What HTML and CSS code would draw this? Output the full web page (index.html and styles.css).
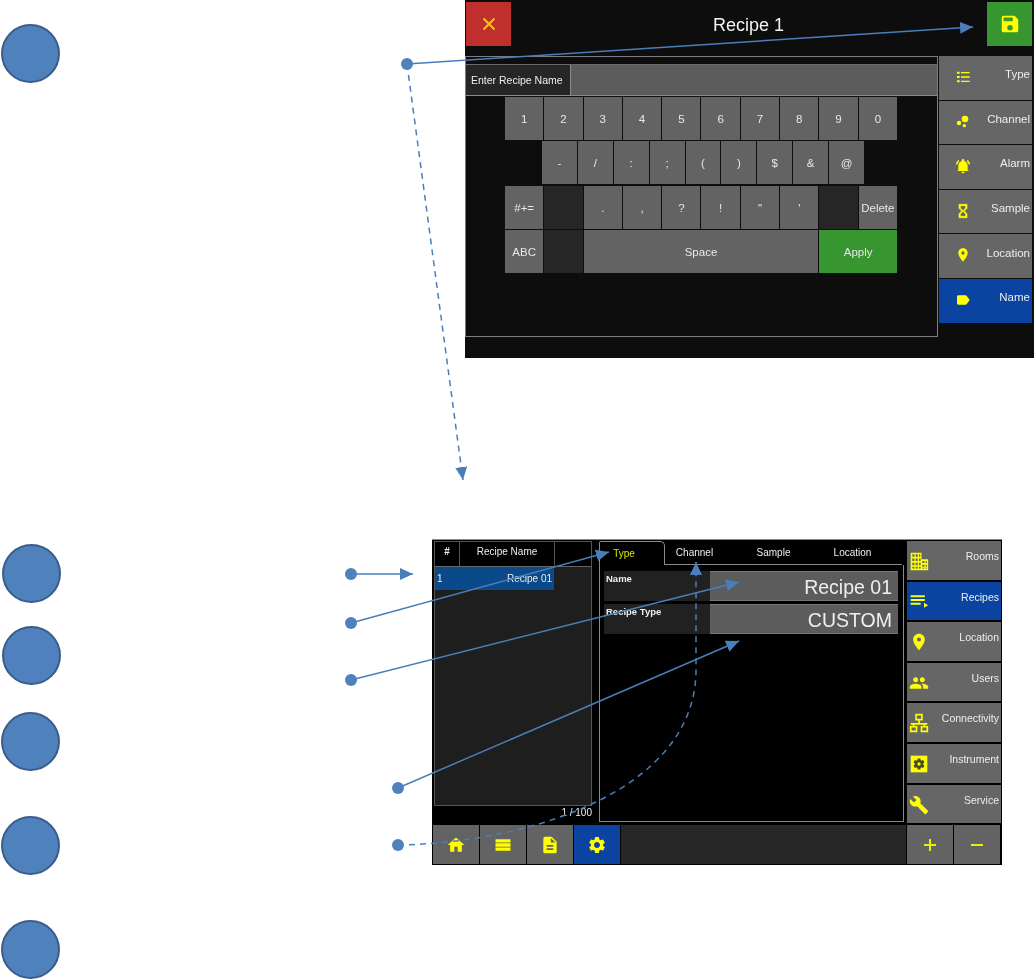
FILE: index.html
```html
<!DOCTYPE html>
<html lang="en">
<head>
  <meta charset="UTF-8">
  <title>Recipe Setup</title>
  <link rel="stylesheet" href="styles.css">
</head>
<body>
  <div class="canvas">

    <!-- recipe name keyboard screen -->
    <div class="screen screen-name">
      <div class="name-header">
        <div class="head-btn red">
          <svg class="icon-x" viewBox="0 0 14 14"><path d="M1.5 1.5l11 11M12.5 1.5l-11 11"/></svg>
        </div>
        <div class="name-title">Recipe 1</div>
        <div class="head-btn green">
          <svg class="icon-save" viewBox="0 0 24 24"><path d="M17 3H5a2 2 0 0 0-2 2v14a2 2 0 0 0 2 2h14a2 2 0 0 0 2-2V7l-4-4zm-5 16a3 3 0 1 1 0-6 3 3 0 0 1 0 6zm3-10H5V5h10v4z"/></svg>
        </div>
      </div>
      <div class="name-main">
        <div class="name-panel">
          <div class="input-row">
            <div class="input-label">Enter Recipe Name</div>
            <div class="input-box"></div>
          </div>
          <div class="keys">
            <div class="key-row">
              <div class="key">1</div><div class="key">2</div><div class="key">3</div><div class="key">4</div><div class="key">5</div>
              <div class="key">6</div><div class="key">7</div><div class="key">8</div><div class="key">9</div><div class="key">0</div>
            </div>
            <div class="key-row row-nine">
              <div class="key">-</div><div class="key">/</div><div class="key">:</div><div class="key">;</div><div class="key">(</div>
              <div class="key">)</div><div class="key">$</div><div class="key">&amp;</div><div class="key">@</div>
            </div>
            <div class="key-row row-gap">
              <div class="key">#+=</div><div class="key off"></div><div class="key">.</div><div class="key">,</div><div class="key">?</div>
              <div class="key">!</div><div class="key">"</div><div class="key">'</div><div class="key off"></div><div class="key">Delete</div>
            </div>
            <div class="key-row">
              <div class="key">ABC</div><div class="key off"></div>
              <div class="key span-six">Space</div>
              <div class="key span-two apply">Apply</div>
            </div>
          </div>
        </div>
        <div class="side-menu">
          <div class="side-btn">
            <svg class="icon" viewBox="0 0 24 24"><path d="M3 4h4v3H3zM3 10.5h4v3H3zM3 17h4v3H3zM9 4.5h13v2H9zM9 11h13v2H9zM9 17.500h13v2H9z"/></svg>
            <span>Type</span>
          </div>
          <div class="side-btn">
            <svg class="icon" viewBox="0 0 24 24"><circle cx="15" cy="9" r="5"/><circle cx="6" cy="15" r="3.300"/><circle cx="14" cy="19" r="2.500"/></svg>
            <span>Channel</span>
          </div>
          <div class="side-btn">
            <svg class="icon" viewBox="0 0 24 24"><path d="M12 23a2.500 2.500 0 0 0 2.500-2.500h-5A2.500 2.500 0 0 0 12 23zm7-5v-6c0-3.600-2-6.300-5-7V3.500a2 2 0 0 0-4 0V5c-3 .7-5 3.400-5 7v6l-2 1.500h18L19 18z"/><path d="M4.500 3L1 9l2 1 3.500-5.500zM19.500 3L23 9l-2 1-3.500-5.500z"/></svg>
            <span>Alarm</span>
          </div>
          <div class="side-btn">
            <svg class="icon icon-bold" viewBox="0 0 24 24"><path d="M6 2v6h.01L6 8.010 10 12l-4 4 .01.01H6V22h12v-5.990h-.01L18 16l-4-4 4-3.990-.01-.01H18V2H6zm10 14.500V20H8v-3.500l4-4 4 4zm-4-5l-4-4V4h8v3.500l-4 4z"/></svg>
            <span>Sample</span>
          </div>
          <div class="side-btn">
            <svg class="icon" viewBox="0 0 24 24"><path d="M12 2C8.130 2 5 5.130 5 9c0 5.250 7 13 7 13s7-7.750 7-13c0-3.870-3.130-7-7-7zm0 9.500a2.500 2.500 0 0 1 0-5 2.500 2.500 0 0 1 0 5z"/></svg>
            <span>Location</span>
          </div>
          <div class="side-btn active">
            <svg class="icon" viewBox="0 0 24 24"><path d="M17.630 5.840C17.270 5.330 16.670 5 16 5L5 5.010C3.900 5.010 3 5.900 3 7v10c0 1.100.9 1.990 2 1.990L16 19c.67 0 1.270-.33 1.630-.84L22 12l-4.370-6.160z"/></svg>
            <span>Name</span>
          </div>
        </div>
      </div>
    </div>

    <!-- recipes settings screen -->
    <div class="screen screen-setup">
      <div class="setup-left">
        <div class="recipe-list">
          <div class="list-head">
            <div class="col-num">#</div>
            <div class="col-name">Recipe Name</div>
          </div>
          <div class="list-body">
            <div class="list-row"><span>1</span><span>Recipe 01</span></div>
          </div>
        </div>
        <div class="list-count">1 / 100</div>
      </div>
      <div class="setup-center">
        <div class="tabs">
          <div class="tab current">Type</div>
          <div class="tab">Channel</div>
          <div class="tab">Sample</div>
          <div class="tab">Location</div>
        </div>
        <div class="tab-panel">
          <div class="form-row">
            <div class="form-label">Name</div>
            <div class="form-value">Recipe 01</div>
          </div>
          <div class="form-row">
            <div class="form-label">Recipe Type</div>
            <div class="form-value">CUSTOM</div>
          </div>
        </div>
      </div>
      <div class="setup-nav">
        <div class="nav-btn">
          <svg class="icon" viewBox="0 0 24 24"><path fill-rule="evenodd" d="M2 2h13v8h8v13H2zM4 4v3h2.500V4zm4 0v3h2.500V4zm4 0v3h1.500V4zM4 9v3h2.500V9zm4 0v3h2.500V9zm4 0v3h2V9zm4 3v2.500h2.500V12zm4 0v2.500h1.500V12zM4 14v3h2.500v-3zm4 0v3h2.500v-3zm4 0v3h2v-3zm4 2.500v2.500h2.500v-2.500zm4 0v2.500h1.500v-2.500zM4 19v2h2.500v-2zm4 0v2h2.500v-2zm4 0v2h2v-2zm4 1v1h2.500v-1zm4 0v1h1.500v-1z"/></svg>
          <span>Rooms</span>
        </div>
        <div class="nav-btn active">
          <svg class="icon" viewBox="0 0 24 24"><path d="M2 4h17v2.400H2zM2 8.500h17v2.400H2zM2 13h12v2.400H2zM18 13l5 3-5 3z"/></svg>
          <span>Recipes</span>
        </div>
        <div class="nav-btn">
          <svg class="icon" viewBox="0 0 24 24"><path d="M12 2C8.130 2 5 5.130 5 9c0 5.250 7 13 7 13s7-7.750 7-13c0-3.870-3.130-7-7-7zm0 9.500a2.500 2.500 0 0 1 0-5 2.500 2.500 0 0 1 0 5z"/></svg>
          <span>Location</span>
        </div>
        <div class="nav-btn">
          <svg class="icon" viewBox="0 0 24 24"><path d="M16 11c1.660 0 2.990-1.340 2.990-3S17.660 5 16 5s-3 1.340-3 3 1.340 3 3 3zm-8 0c1.660 0 2.990-1.340 2.990-3S9.660 5 8 5 5 6.340 5 8s1.340 3 3 3zm0 2c-2.330 0-7 1.170-7 3.500V19h14v-2.500c0-2.330-4.670-3.500-7-3.500zm8 0c-.29 0-.62.02-.97.05 1.160.84 1.970 1.970 1.970 3.450V19h6v-2.500c0-2.330-4.670-3.500-7-3.500z"/></svg>
          <span>Users</span>
        </div>
        <div class="nav-btn">
          <svg class="icon icon-line" viewBox="0 0 24 24"><path d="M8.500 2h7v6h-7zM12 8v5M2 13h20M5.500 13v3M18.500 13v3M2 16.500h7v5.500H2zM15 16.500h7v5.500h-7z"/></svg>
          <span>Connectivity</span>
        </div>
        <div class="nav-btn">
          <svg class="icon" viewBox="0 0 24 24">
            <rect x="2" y="2" width="20" height="20"/>
            <path class="gear-cut" d="M19.140 12.940c.04-.3.06-.61.06-.94 0-.32-.02-.64-.07-.94l2.030-1.580c.18-.14.23-.41.12-.61l-1.920-3.320c-.12-.22-.37-.29-.59-.22l-2.390.96c-.5-.38-1.030-.7-1.620-.94l-.36-2.540c-.04-.24-.24-.41-.48-.41h-3.840c-.24 0-.43.17-.47.41l-.36 2.540c-.59.24-1.130.57-1.620.94l-2.390-.96c-.22-.08-.47 0-.59.22L2.740 8.870c-.12.21-.08.47.12.61l2.030 1.580c-.05.3-.09.63-.09.94s.02.64.07.94l-2.030 1.580c-.18.14-.23.41-.12.61l1.920 3.320c.12.22.37.29.59.22l2.390-.96c.5.38 1.030.7 1.620.94l.36 2.540c.05.24.24.41.48.41h3.840c.24 0 .44-.17.47-.41l.36-2.540c.59-.24 1.130-.56 1.620-.94l2.390.96c.22.08.47 0 .59-.22l1.920-3.320c.12-.22.07-.47-.12-.61l-2.010-1.580z" transform="translate(3.600 3.600) scale(.7)"/>
            <circle cx="12" cy="12" r="2"/>
          </svg>
          <span>Instrument</span>
        </div>
        <div class="nav-btn">
          <svg class="icon" viewBox="0 0 24 24"><path d="M22.700 19l-9.100-9.100c.9-2.300.4-5-1.500-6.900-2-2-5-2.400-7.400-1.300L9 6 6 9 1.600 4.700C.4 7.100.9 10.100 2.900 12.100c1.900 1.900 4.600 2.400 6.900 1.500l9.100 9.100c.4.4 1 .4 1.400 0l2.300-2.300c.5-.4.5-1.100.1-1.400z"/></svg>
          <span>Service</span>
        </div>
      </div>
      <div class="setup-bottom">
        <div class="tool-btn">
          <svg class="icon" viewBox="0 0 24 24"><path d="M10 20v-6h4v6h5v-8h3L12 3 2 12h3v8z"/></svg>
        </div>
        <div class="tool-btn">
          <svg class="icon" viewBox="0 0 24 24"><path d="M3 5h18v4H3zM3 10h18v4H3zM3 15h18v4H3z"/></svg>
        </div>
        <div class="tool-btn">
          <svg class="icon" viewBox="0 0 24 24"><path d="M14 2H6c-1.100 0-1.990.9-1.990 2L4 20c0 1.100.89 2 1.990 2H18c1.100 0 2-.9 2-2V8l-6-6zm2 16H8v-2h8v2zm0-4H8v-2h8v2zm-3-5V3.500L18.500 9H13z"/></svg>
        </div>
        <div class="tool-btn active">
          <svg class="icon" viewBox="0 0 24 24"><path d="M19.140 12.940c.04-.3.06-.61.06-.94 0-.32-.02-.64-.07-.94l2.030-1.580c.18-.14.23-.41.12-.61l-1.920-3.320c-.12-.22-.37-.29-.59-.22l-2.390.96c-.5-.38-1.030-.7-1.620-.94l-.36-2.540c-.04-.24-.24-.41-.48-.41h-3.840c-.24 0-.43.17-.47.41l-.36 2.540c-.59.24-1.130.57-1.620.94l-2.390-.96c-.22-.08-.47 0-.59.22L2.740 8.870c-.12.21-.08.47.12.61l2.030 1.580c-.05.3-.09.63-.09.94s.02.64.07.94l-2.030 1.580c-.18.14-.23.41-.12.61l1.920 3.320c.12.22.37.29.59.22l2.390-.96c.5.38 1.030.7 1.620.94l.36 2.540c.05.24.24.41.48.41h3.840c.24 0 .44-.17.47-.41l.36-2.540c.59-.24 1.130-.56 1.620-.94l2.390.96c.22.08.47 0 .59-.22l1.920-3.320c.12-.22.07-.47-.12-.61l-2.010-1.580zM12 15.600c-1.980 0-3.600-1.620-3.600-3.600s1.620-3.600 3.600-3.600 3.600 1.620 3.600 3.600-1.620 3.600-3.600 3.600z"/></svg>
        </div>
        <div class="tool-fill"></div>
        <div class="tool-btn">
          <svg class="icon-pm" viewBox="0 0 14 14"><path d="M7 1v12M1 7h12"/></svg>
        </div>
        <div class="tool-btn">
          <svg class="icon-pm" viewBox="0 0 14 14"><path d="M1 7h12"/></svg>
        </div>
      </div>
    </div>

    <!-- numbered circles -->
    <div class="step step-1"></div>
    <div class="step step-2"></div>
    <div class="step step-3"></div>
    <div class="step step-4"></div>
    <div class="step step-5"></div>
    <div class="step step-6"></div>

    <!-- callouts over the screens -->
    <svg class="callouts" width="1034" height="979" viewBox="0 0 1034 979">
      <defs>
        <marker id="head" markerUnits="userSpaceOnUse" markerWidth="14" markerHeight="12" refX="13" refY="6" orient="auto">
          <path d="M0 0L13 6L0 12z" fill="#4a7ebb"/>
        </marker>
      </defs>
      <path class="line" marker-end="url(#head)" d="M407 64L973 27"/>
      <path class="line dashed" marker-end="url(#head)" d="M407 64L463 480"/>
      <path class="line" marker-end="url(#head)" d="M351 574L413 574"/>
      <path class="line" marker-end="url(#head)" d="M351 623L609 552"/>
      <path class="line" marker-end="url(#head)" d="M351 680L739 582"/>
      <path class="line" marker-end="url(#head)" d="M398 788L739 641"/>
      <path class="line dashed" marker-end="url(#head)" d="M398 845C530 843 696 790 696 670L696 562"/>
      <circle class="dot" cx="407" cy="64" r="6"/>
      <circle class="dot" cx="351" cy="574" r="6"/>
      <circle class="dot" cx="351" cy="623" r="6"/>
      <circle class="dot" cx="351" cy="680" r="6"/>
      <circle class="dot" cx="398" cy="788" r="6"/>
      <circle class="dot" cx="398" cy="845" r="6"/>
    </svg>
  </div>
</body>
</html>
```

FILE: styles.css
```css
body {
  margin: 0;
  background: #fff;
  font-family: "Liberation Sans", Arial, sans-serif;
}
.canvas {
  position: relative;
  width: 1034px;
  height: 979px;
  overflow: hidden;
}
.screen {
  position: absolute;
  color: #eee;
  filter: blur(0.5px);
}
.icon {
  width: 20px;
  height: 20px;
  fill: #ff0;
  flex: none;
}
.icon-line {
  fill: none;
  stroke: #ff0;
  stroke-width: 2;
}
.icon-bold {
  stroke: #ff0;
  stroke-width: 1;
}
.icon-save {
  width: 22px;
  height: 22px;
  fill: #ff0;
}
.gear-cut { fill: #4a4a20; }

/* name screen */
.screen-name {
  left: 465px;
  top: 0;
  width: 569px;
  height: 358px;
  background: #0d0d0d;
  box-sizing: border-box;
  padding: 2px 2px 0 0;
}
.name-header {
  display: flex;
  align-items: center;
  height: 44px;
  margin-bottom: 10px;
}
.head-btn {
  width: 45px;
  height: 44px;
  margin-left: 1px;
  display: flex;
  align-items: center;
  justify-content: center;
}
.red { background: #bf2f2b; }
.green { background: #37962f; }
.icon-x {
  width: 14px;
  height: 14px;
  fill: none;
  stroke: #f5c518;
  stroke-width: 2;
}
.name-title {
  flex: 1;
  text-align: center;
  font-size: 18px;
  color: #f2f2f2;
  padding-top: 3px;
}
.name-main {
  display: flex;
  gap: 1px;
}
.name-panel {
  width: 473px;
  height: 281px;
  box-sizing: border-box;
  border: 1px solid #7d7d7d;
  padding-top: 7px;
}
.input-row {
  display: flex;
  height: 32px;
  border-top: 1px solid #6a6a6a;
  border-bottom: 1px solid #8a8a8a;
  box-sizing: border-box;
}
.input-label {
  width: 104px;
  background: #262626;
  font-size: 10.500px;
  line-height: 30px;
  padding-left: 5px;
  box-sizing: border-box;
}
.input-box {
  flex: 1;
  background: #5c5c5c;
  border-left: 1px solid #8a8a8a;
}
.keys {
  width: 392px;
  margin: 1px 0 0 39px;
  display: flex;
  flex-direction: column;
  gap: 1px;
}
.key-row {
  display: grid;
  grid-template-columns: repeat(10, 1fr);
  gap: 1px;
  height: 43px;
}
.row-nine {
  grid-template-columns: repeat(9, 1fr);
  width: 322px;
  margin-left: 37px;
}
.row-gap { margin-top: 1px; }
.key {
  background: #636363;
  font-size: 11.500px;
  color: #e8e8e8;
  display: flex;
  align-items: center;
  justify-content: center;
}
.key.off { background: #262626; }
.span-six { grid-column: span 6; }
.span-two { grid-column: span 2; }
.key.apply { background: #37962f; }
.side-menu {
  display: flex;
  flex-direction: column;
  gap: 1px;
  width: 93px;
}
.side-btn {
  height: 43.600px;
  background: #666;
  display: flex;
  align-items: center;
  justify-content: space-between;
  box-sizing: border-box;
  padding: 0 2px 7px 16px;
  font-size: 11.500px;
}
.side-btn .icon {
  width: 16px;
  height: 16px;
  margin-top: 5px;
}
.side-btn.active { background: #0a44a0; }

/* settings screen */
.screen-setup {
  left: 432px;
  top: 539px;
  width: 570px;
  height: 326px;
  background: #000;
  border-top: 1px solid #8a8a8a;
  box-sizing: border-box;
  display: grid;
  grid-template-columns: 167px 308px 95px;
  grid-template-rows: 285px 40px;
}
.setup-left { padding-left: 2px; }
.recipe-list {
  width: 158px;
  margin-top: 1px;
  border: 1px solid #555;
  box-sizing: border-box;
  height: 265px;
  background: #1e1e1e;
}
.list-head {
  display: flex;
  height: 25px;
  background: #000;
  font-size: 10px;
  line-height: 20px;
  border-bottom: 1px solid #666;
  box-sizing: border-box;
}
.col-num {
  width: 24px;
  text-align: center;
  font-weight: bold;
  border-right: 1px solid #555;
}
.col-name {
  width: 94px;
  text-align: center;
  border-right: 1px solid #555;
}
.list-row {
  width: 119px;
  height: 23px;
  background: #0a4a8a;
  display: flex;
  justify-content: space-between;
  align-items: center;
  font-size: 10px;
  padding: 0 2px;
  box-sizing: border-box;
}
.list-count {
  width: 158px;
  text-align: right;
  font-size: 10px;
  margin-top: 1px;
}
.tabs {
  display: flex;
  height: 24px;
  font-size: 10px;
}
.tab {
  width: 79px;
  padding-right: 20px;
  text-align: center;
  line-height: 24px;
  border-bottom: 1px solid #8a8a8a;
  box-sizing: border-box;
}
.tab.current {
  width: 66px;
  padding-right: 16px;
  color: #d9e800;
  border: 1px solid #8a8a8a;
  border-bottom: none;
  border-radius: 2px 5px 0 0;
}
.setup-center {
  padding-top: 1px;
  width: 305px;
}
.tab-panel {
  height: 257px;
  border: 1px solid #8a8a8a;
  border-top: none;
  box-sizing: border-box;
  padding: 6px 5px 0 4px;
  display: flex;
  flex-direction: column;
  gap: 3px;
}
.form-row {
  display: flex;
  height: 30px;
}
.form-label {
  width: 106px;
  background: #212121;
  font-size: 9.500px;
  font-weight: bold;
  padding: 2px 0 0 2px;
  box-sizing: border-box;
}
.form-value {
  flex: 1;
  background: #5c5c5c;
  font-size: 19.500px;
  text-align: right;
  line-height: 30px;
  padding-right: 6px;
  border-top: 1px solid #777;
  border-bottom: 1px solid #777;
  box-sizing: border-box;
}
.setup-nav {
  display: flex;
  flex-direction: column;
  gap: 2px;
  padding: 1px 1px 0 0;
}
.nav-btn {
  height: 38.600px;
  background: #666;
  display: flex;
  justify-content: space-between;
  box-sizing: border-box;
  padding: 9px 2px 0 2px;
  font-size: 10.500px;
}
.nav-btn .icon { margin-top: 1px; }
.nav-btn.active { background: #0a44a0; }
.setup-bottom {
  grid-column: 1 / 4;
  display: flex;
  gap: 1px;
  padding: 0 2px 1px 1px;
}
.tool-btn {
  width: 46px;
  background: #636363;
  display: flex;
  align-items: center;
  justify-content: center;
}
.tool-btn.active { background: #0a44a0; }
.tool-fill {
  flex: 1;
  background: #262626;
}
.icon-pm {
  width: 14px;
  height: 14px;
  fill: none;
  stroke: #e6f000;
  stroke-width: 2;
}

/* steps and callouts */
.step {
  position: absolute;
  width: 59px;
  height: 59px;
  border-radius: 50%;
  background: #4f81bd;
  border: 2px solid #385d8a;
  box-sizing: border-box;
}
.step-1 { left: 1px; top: 24px; }
.step-2 { left: 2px; top: 544px; }
.step-3 { left: 2px; top: 626px; }
.step-4 { left: 1px; top: 712px; }
.step-5 { left: 1px; top: 816px; }
.step-6 { left: 1px; top: 920px; }
.callouts {
  position: absolute;
  left: 0;
  top: 0;
  pointer-events: none;
}
.line {
  fill: none;
  stroke: #4a7ebb;
  stroke-width: 1.500;
}
.dashed { stroke-dasharray: 6 5; }
.dot { fill: #4f81bd; }
```
